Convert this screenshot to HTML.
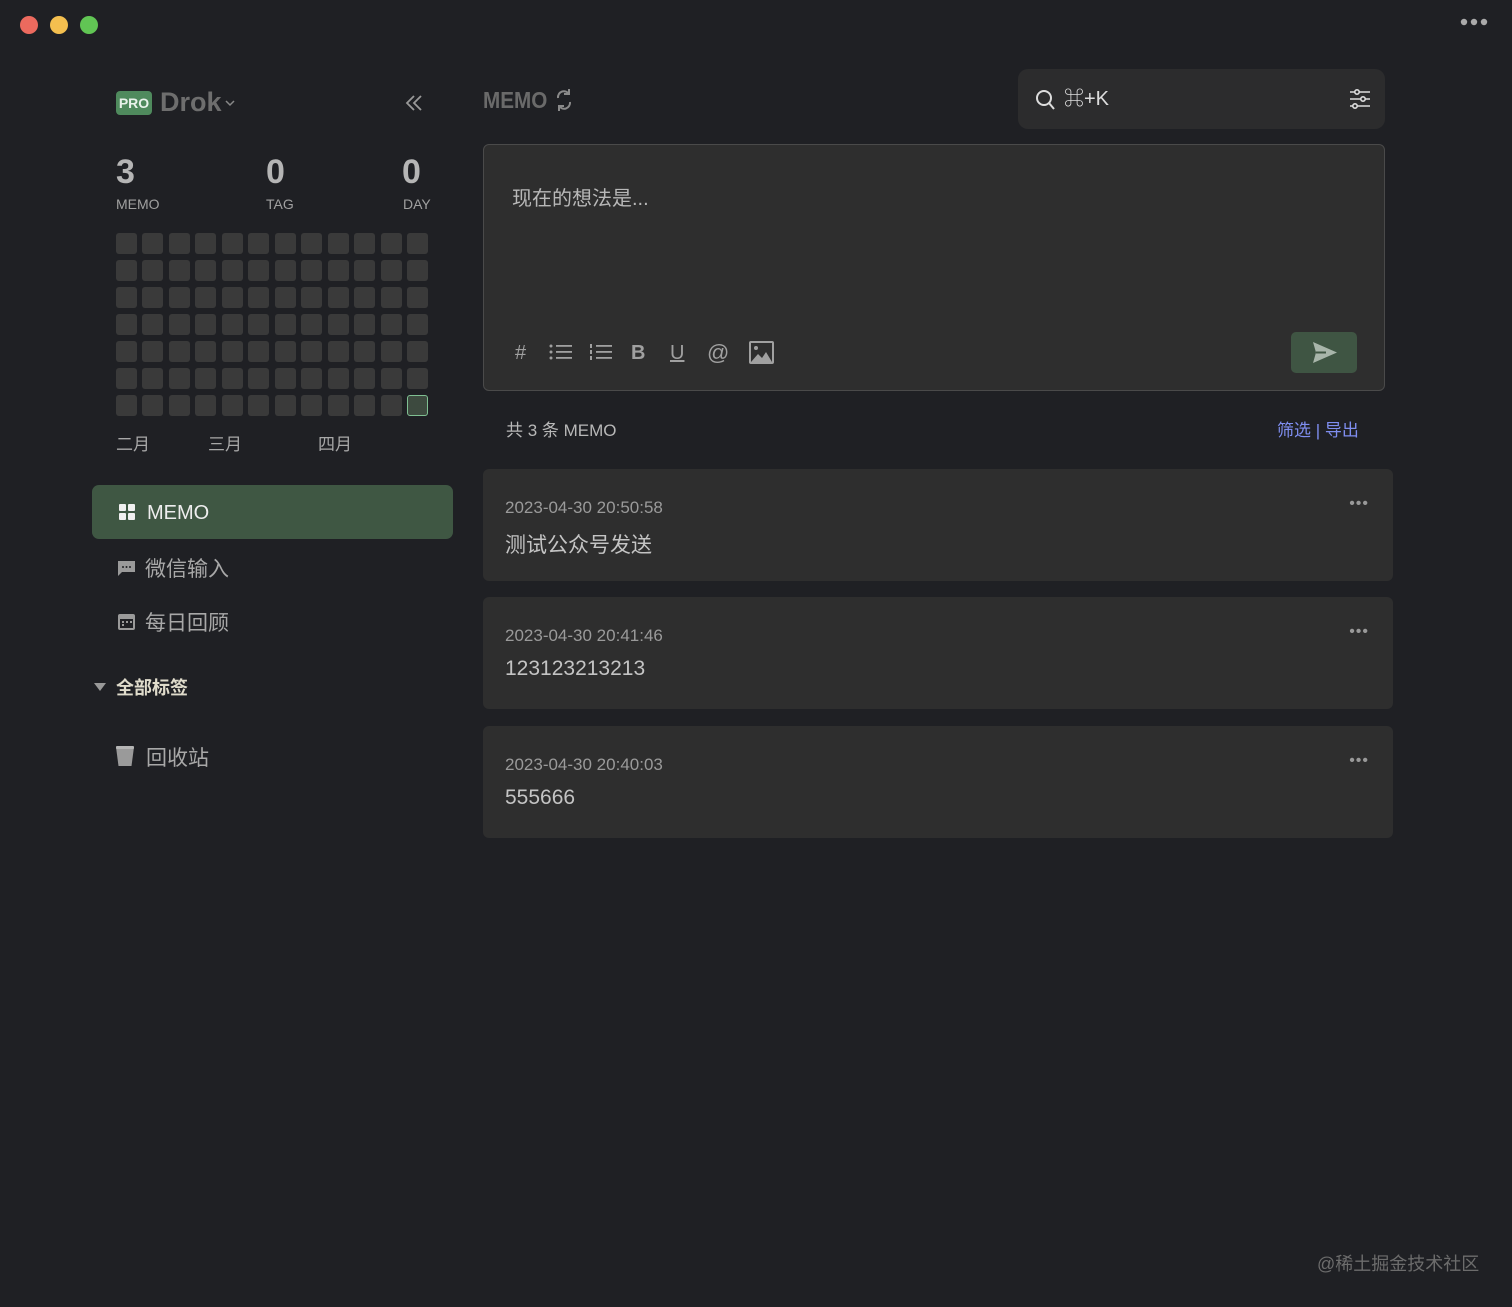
<!DOCTYPE html>
<html><head><meta charset="utf-8"><style>
*{margin:0;padding:0;box-sizing:border-box}
body{width:1512px;height:1307px;background:#1f2024;font-family:"Liberation Sans","Noto Sans CJK SC",sans-serif;color:#b0b0b0;position:relative;overflow:hidden}
.a{position:absolute}
.dot{width:18px;height:18px;border-radius:50%;top:16px}
.cell{position:absolute;width:21px;height:21px;border-radius:3px;background:#3a3a3a}
.card{position:absolute;left:483px;width:910px;height:112px;background:#2e2e2e;border-radius:6px}
.card .t{position:absolute;left:22px;top:29px;font-size:17px;color:#9a9a9a}
.card .c{position:absolute;left:22px;top:60px;font-size:21px;color:#c4c4c4}
.card .m{position:absolute;right:24px;top:26px;font-size:16px;color:#999;letter-spacing:1px}
.ic{position:absolute;top:340px;color:#a0a0a0}
</style></head><body>
<div class="a dot" style="left:20px;background:#ec6a5e"></div>
<div class="a dot" style="left:50px;background:#f4bf4f"></div>
<div class="a dot" style="left:80px;background:#61c554"></div>
<svg class="a" style="left:1460px;top:17px" width="30" height="10"><circle cx="4" cy="5" r="3.2" fill="#aaa"/><circle cx="14" cy="5" r="3.2" fill="#aaa"/><circle cx="24" cy="5" r="3.2" fill="#aaa"/></svg>

<div class="a" style="left:116px;top:91px;width:36px;height:24px;background:#4f8a5d;border-radius:4px;color:#e8f2ea;font-weight:bold;font-size:14px;line-height:24px;text-align:center">PRO</div>
<div class="a" style="left:160px;top:87px;font-size:27px;font-weight:bold;color:#6e6e6e">Drok</div>
<svg class="a" style="left:225px;top:100px" width="10" height="7" fill="none" stroke="#888" stroke-width="1.5"><path d="M1 1l4 4 4-4"/></svg>
<svg class="a" style="left:404px;top:93px" width="20" height="20" fill="none" stroke="#999" stroke-width="1.8"><path d="M10 3 3 10l7 7M17 3l-7 7 7 7"/></svg>

<div class="a" style="left:116px;top:153px;font-size:34px;font-weight:bold;color:#b5b5b5">3</div>
<div class="a" style="left:266px;top:153px;font-size:34px;font-weight:bold;color:#b5b5b5">0</div>
<div class="a" style="left:402px;top:153px;font-size:34px;font-weight:bold;color:#b5b5b5">0</div>
<div class="a" style="left:116px;top:196px;font-size:14px;color:#a0a0a0">MEMO</div>
<div class="a" style="left:266px;top:196px;font-size:14px;color:#a0a0a0">TAG</div>
<div class="a" style="left:403px;top:196px;font-size:14px;color:#a0a0a0">DAY</div>

<div class="a" style="left:0;top:0">
<div class="cell" style="left:116px;top:233px"></div><div class="cell" style="left:142px;top:233px"></div><div class="cell" style="left:169px;top:233px"></div><div class="cell" style="left:195px;top:233px"></div><div class="cell" style="left:222px;top:233px"></div><div class="cell" style="left:248px;top:233px"></div><div class="cell" style="left:275px;top:233px"></div><div class="cell" style="left:301px;top:233px"></div><div class="cell" style="left:328px;top:233px"></div><div class="cell" style="left:354px;top:233px"></div><div class="cell" style="left:381px;top:233px"></div><div class="cell" style="left:407px;top:233px"></div>
<div class="cell" style="left:116px;top:260px"></div><div class="cell" style="left:142px;top:260px"></div><div class="cell" style="left:169px;top:260px"></div><div class="cell" style="left:195px;top:260px"></div><div class="cell" style="left:222px;top:260px"></div><div class="cell" style="left:248px;top:260px"></div><div class="cell" style="left:275px;top:260px"></div><div class="cell" style="left:301px;top:260px"></div><div class="cell" style="left:328px;top:260px"></div><div class="cell" style="left:354px;top:260px"></div><div class="cell" style="left:381px;top:260px"></div><div class="cell" style="left:407px;top:260px"></div>
<div class="cell" style="left:116px;top:287px"></div><div class="cell" style="left:142px;top:287px"></div><div class="cell" style="left:169px;top:287px"></div><div class="cell" style="left:195px;top:287px"></div><div class="cell" style="left:222px;top:287px"></div><div class="cell" style="left:248px;top:287px"></div><div class="cell" style="left:275px;top:287px"></div><div class="cell" style="left:301px;top:287px"></div><div class="cell" style="left:328px;top:287px"></div><div class="cell" style="left:354px;top:287px"></div><div class="cell" style="left:381px;top:287px"></div><div class="cell" style="left:407px;top:287px"></div>
<div class="cell" style="left:116px;top:314px"></div><div class="cell" style="left:142px;top:314px"></div><div class="cell" style="left:169px;top:314px"></div><div class="cell" style="left:195px;top:314px"></div><div class="cell" style="left:222px;top:314px"></div><div class="cell" style="left:248px;top:314px"></div><div class="cell" style="left:275px;top:314px"></div><div class="cell" style="left:301px;top:314px"></div><div class="cell" style="left:328px;top:314px"></div><div class="cell" style="left:354px;top:314px"></div><div class="cell" style="left:381px;top:314px"></div><div class="cell" style="left:407px;top:314px"></div>
<div class="cell" style="left:116px;top:341px"></div><div class="cell" style="left:142px;top:341px"></div><div class="cell" style="left:169px;top:341px"></div><div class="cell" style="left:195px;top:341px"></div><div class="cell" style="left:222px;top:341px"></div><div class="cell" style="left:248px;top:341px"></div><div class="cell" style="left:275px;top:341px"></div><div class="cell" style="left:301px;top:341px"></div><div class="cell" style="left:328px;top:341px"></div><div class="cell" style="left:354px;top:341px"></div><div class="cell" style="left:381px;top:341px"></div><div class="cell" style="left:407px;top:341px"></div>
<div class="cell" style="left:116px;top:368px"></div><div class="cell" style="left:142px;top:368px"></div><div class="cell" style="left:169px;top:368px"></div><div class="cell" style="left:195px;top:368px"></div><div class="cell" style="left:222px;top:368px"></div><div class="cell" style="left:248px;top:368px"></div><div class="cell" style="left:275px;top:368px"></div><div class="cell" style="left:301px;top:368px"></div><div class="cell" style="left:328px;top:368px"></div><div class="cell" style="left:354px;top:368px"></div><div class="cell" style="left:381px;top:368px"></div><div class="cell" style="left:407px;top:368px"></div>
<div class="cell" style="left:116px;top:395px"></div><div class="cell" style="left:142px;top:395px"></div><div class="cell" style="left:169px;top:395px"></div><div class="cell" style="left:195px;top:395px"></div><div class="cell" style="left:222px;top:395px"></div><div class="cell" style="left:248px;top:395px"></div><div class="cell" style="left:275px;top:395px"></div><div class="cell" style="left:301px;top:395px"></div><div class="cell" style="left:328px;top:395px"></div><div class="cell" style="left:354px;top:395px"></div><div class="cell" style="left:381px;top:395px"></div><div class="cell" style="left:407px;top:395px;background:#3d4a3f;border:1.5px solid #7fbf92"></div>
</div>
<div class="a" style="left:116px;top:430px;font-size:17px;color:#a8a8a8">二月</div>
<div class="a" style="left:208px;top:430px;font-size:17px;color:#a8a8a8">三月</div>
<div class="a" style="left:318px;top:430px;font-size:17px;color:#a8a8a8">四月</div>

<div class="a" style="left:92px;top:485px;width:361px;height:54px;background:#3f5743;border-radius:7px"></div>
<svg class="a" style="left:119px;top:504px" width="17" height="17" fill="#f0f0f0"><rect x="0" y="0" width="7" height="7" rx="1"/><rect x="9" y="0" width="7" height="7" rx="1"/><rect x="0" y="9" width="7" height="7" rx="1"/><rect x="9" y="9" width="7" height="7" rx="1"/></svg>
<div class="a" style="left:147px;top:502px;font-size:20px;color:#eee">MEMO</div>
<svg class="a" style="left:117px;top:559px" width="19" height="18"><path d="M1 2h17v11H5l-4 4z" fill="#9a9a9a"/><circle cx="6" cy="8" r="1" fill="#1f2024"/><circle cx="9.5" cy="8" r="1" fill="#1f2024"/><circle cx="13" cy="8" r="1" fill="#1f2024"/></svg>
<div class="a" style="left:145px;top:553px;font-size:21px;color:#a8a8a8">微信输入</div>
<svg class="a" style="left:117px;top:612px" width="19" height="19"><rect x="1" y="2" width="17" height="16" rx="2" fill="#9a9a9a"/><rect x="3" y="7" width="13" height="9" fill="#1f2024"/><rect x="5" y="9" width="2" height="2" fill="#9a9a9a"/><rect x="9" y="9" width="2" height="2" fill="#9a9a9a"/><rect x="13" y="9" width="2" height="2" fill="#9a9a9a"/><rect x="5" y="12" width="2" height="2" fill="#9a9a9a"/></svg>
<div class="a" style="left:145px;top:607px;font-size:21px;color:#a8a8a8">每日回顾</div>
<svg class="a" style="left:94px;top:683px" width="12" height="9"><path d="M0 0h12L6 8z" fill="#999"/></svg>
<div class="a" style="left:116px;top:674px;font-size:18px;font-weight:bold;color:#e0dccc">全部标签</div>
<svg class="a" style="left:116px;top:745px" width="18" height="22"><path d="M0 2h18l-2.5 19h-13z" fill="#9a9a9a"/><rect x="0" y="1" width="18" height="3" rx="1" fill="#b5b5b5"/></svg>
<div class="a" style="left:146px;top:742px;font-size:21px;color:#a8a8a8">回收站</div>

<div class="a" style="left:483px;top:87px;font-size:23px;font-weight:bold;color:#6a6a6a;transform:scaleX(0.9);transform-origin:left">MEMO</div>
<svg class="a" style="left:554px;top:88px" width="20" height="24" fill="none" stroke="#8a8a8a" stroke-width="2"><path d="M4 10a6 6 0 0 1 11-4M16 14a6 6 0 0 1-11 4"/><path d="M15 1v5h-5M5 23v-5h5"/></svg>

<div class="a" style="left:1018px;top:69px;width:367px;height:60px;background:#2c2c2d;border-radius:10px"></div>
<svg class="a" style="left:1035px;top:89px" width="21" height="22" fill="none" stroke="#ddd" stroke-width="2"><circle cx="9" cy="9" r="7"/><path d="M14 14l5 6"/></svg>
<div class="a" style="left:1064px;top:87px;font-size:20px;color:#ddd;line-height:24px">⌘+K</div>
<svg class="a" style="left:1349px;top:88px" width="22" height="22" stroke="#ddd" stroke-width="1.6" fill="none"><path d="M1 4h20M1 11h20M1 18h20"/><circle cx="8" cy="4" r="2.2" fill="#2c2c2d"/><circle cx="14" cy="11" r="2.2" fill="#2c2c2d"/><circle cx="6" cy="18" r="2.2" fill="#2c2c2d"/></svg>

<div class="a" style="left:483px;top:144px;width:902px;height:247px;background:#2e2e2e;border:1.5px solid #4a4a4a;border-radius:6px"></div>
<div class="a" style="left:512px;top:182px;font-size:20px;color:#b8b8b8">现在的想法是...</div>
<div class="ic" style="left:515px;font-size:20px;top:342px">#</div>
<svg class="a" style="left:549px;top:343px" width="24" height="18" fill="#a0a0a0"><circle cx="2" cy="3" r="1.5"/><circle cx="2" cy="9" r="1.5"/><circle cx="2" cy="15" r="1.5"/><rect x="7" y="2" width="16" height="1.8"/><rect x="7" y="8" width="16" height="1.8"/><rect x="7" y="14" width="16" height="1.8"/></svg>
<svg class="a" style="left:589px;top:343px" width="24" height="18" fill="#a0a0a0"><rect x="1" y="1" width="2" height="4"/><rect x="1" y="7" width="2" height="4"/><rect x="1" y="13" width="2" height="4"/><rect x="7" y="2" width="16" height="1.8"/><rect x="7" y="8" width="16" height="1.8"/><rect x="7" y="14" width="16" height="1.8"/></svg>
<div class="ic" style="left:631px;font-size:20px;font-weight:bold;top:342px">B</div>
<div class="ic" style="left:670px;font-size:20px;text-decoration:underline;top:342px">U</div>
<div class="ic" style="left:707px;font-size:22px;top:340px">@</div>
<svg class="a" style="left:749px;top:341px" width="25" height="23"><rect x="0" y="0" width="25" height="23" rx="2" fill="#a0a0a0"/><rect x="2" y="2" width="21" height="19" fill="#2e2e2e"/><circle cx="7" cy="7" r="2" fill="#a0a0a0"/><path d="M2 21l7-8 4 4 4-6 6 10z" fill="#a0a0a0"/></svg>
<div class="a" style="left:1291px;top:332px;width:66px;height:41px;background:#3f5543;border-radius:5px"></div>
<svg class="a" style="left:1313px;top:342px" width="24" height="21"><path d="M0 0l24 10.5L0 21l3-10.5z" fill="#a8b5aa"/><path d="M3 10.5h10" stroke="#3f5543" stroke-width="2"/></svg>

<div class="a" style="left:506px;top:416px;font-size:17px;color:#b8b8b8">共 3 条 MEMO</div>
<div class="a" style="left:1277px;top:416px;font-size:17px;color:#7f8ef0">筛选 | 导出</div>

<div class="card" style="top:469px"><div class="t">2023-04-30 20:50:58</div><div class="c">测试公众号发送</div><div class="m">•••</div></div>
<div class="card" style="top:597px"><div class="t">2023-04-30 20:41:46</div><div class="c">123123213213</div><div class="m">•••</div></div>
<div class="card" style="top:726px"><div class="t">2023-04-30 20:40:03</div><div class="c">555666</div><div class="m">•••</div></div>

<div class="a" style="left:1317px;top:1250px;font-size:18px;color:#6c6c6c">@稀土掘金技术社区</div>
</body></html>
